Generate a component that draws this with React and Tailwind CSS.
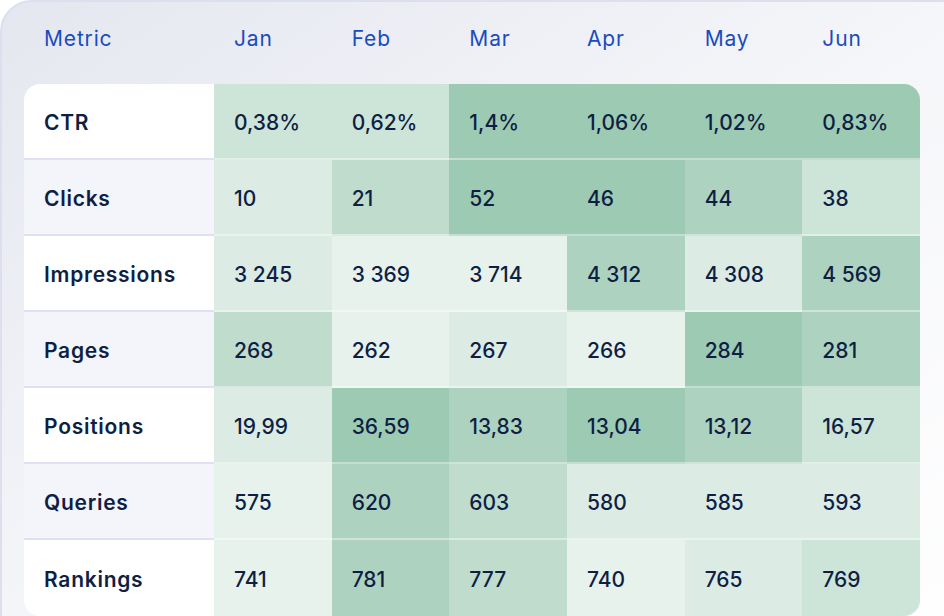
const months = ['Jan', 'Feb', 'Mar', 'Apr', 'May', 'Jun']

// heat levels, 0 = lightest
const shades = [
  'bg-[#e8f2ed]',
  'bg-[#dcebe3]',
  'bg-[#cde4d8]',
  'bg-[#bfdccd]',
  'bg-[#add3c0]',
  'bg-[#9dcab3]',
]

const rows = [
  { name: 'CTR', cells: [['0,38%', 2], ['0,62%', 2], ['1,4%', 5], ['1,06%', 5], ['1,02%', 5], ['0,83%', 5]] },
  { name: 'Clicks', cells: [['10', 1], ['21', 3], ['52', 5], ['46', 5], ['44', 4], ['38', 2]] },
  { name: 'Impressions', cells: [['3 245', 1], ['3 369', 0], ['3 714', 0], ['4 312', 4], ['4 308', 1], ['4 569', 4]] },
  { name: 'Pages', cells: [['268', 3], ['262', 0], ['267', 1], ['266', 0], ['284', 5], ['281', 4]] },
  { name: 'Positions', cells: [['19,99', 1], ['36,59', 5], ['13,83', 4], ['13,04', 5], ['13,12', 4], ['16,57', 2]] },
  { name: 'Queries', cells: [['575', 0], ['620', 4], ['603', 3], ['580', 1], ['585', 1], ['593', 1]] },
  { name: 'Rankings', cells: [['741', 0], ['781', 4], ['777', 3], ['740', 0], ['765', 1], ['769', 2]] },
]

export default function App() {
  return (
    <div className="w-[944px] h-[616px] overflow-hidden bg-white" style={{ fontFamily: 'Inter, "Liberation Sans", sans-serif' }}>
      <div className="w-[980px] h-[660px] rounded-[32px] border-2 border-[#dcdfee] bg-gradient-to-br from-[#e5e7f0] via-[#f5f6f9] to-white">
        <div className="w-[896px] ml-[22px]">
          <div className="grid grid-cols-[190px_repeat(6,1fr)] h-[82px] items-center pb-[8px] text-[21px] tracking-[0.04em] text-[#1a4cbf]">
            <div className="pl-5">Metric</div>
            {months.map(m => (
              <div key={m} className="pl-5">{m}</div>
            ))}
          </div>

          <div className="rounded-2xl overflow-hidden">
            {rows.map((row, i) => {
              const last = i === rows.length - 1
              return (
                <div key={row.name} className="grid grid-cols-[190px_repeat(6,1fr)] h-[76px]">
                  <div className={`flex items-center pl-5 pt-[4px] text-[21px] font-semibold tracking-[0.035em] text-[#0f1f44] ${i % 2 ? 'bg-[#f3f5fb]' : 'bg-white'} ${last ? '' : 'border-b-2 border-[#dfe1f2]'}`}>
                    {row.name}
                  </div>
                  {row.cells.map(([v, lvl], j) => (
                    <div key={j} className={`flex items-center pl-5 pt-[4px] text-[21px] font-medium text-[#0f1f44] ${shades[lvl]} ${last ? '' : 'border-b-2 border-white/40'}`}>
                      {v}
                    </div>
                  ))}
                </div>
              )
            })}
          </div>
        </div>
      </div>
    </div>
  )
}
